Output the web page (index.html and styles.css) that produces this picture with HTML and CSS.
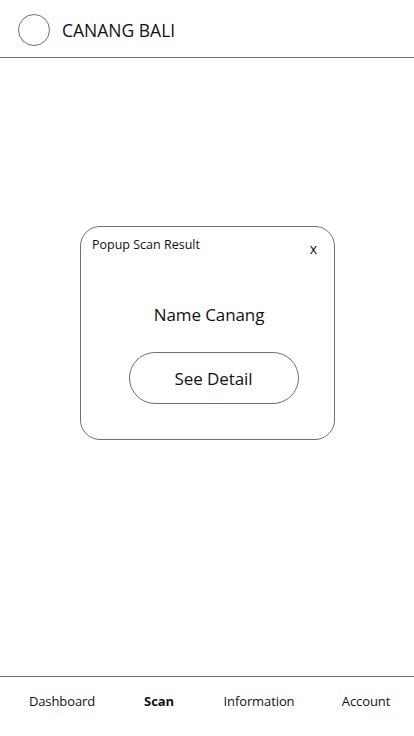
FILE: index.html
```html
<!DOCTYPE html>
<html>
<head>
<meta charset="utf-8">
<link rel="stylesheet" href="styles.css">
</head>
<body>
<div class="app">
  <header class="header">
    <div class="avatar"></div>
    <div class="title">CANANG BALI</div>
  </header>
  <main class="main">
    <div class="popup">
      <div class="popup-head">
        <span class="popup-title">Popup Scan Result</span>
        <span class="close">x</span>
      </div>
      <div class="name">Name Canang</div>
      <div class="btn">See Detail</div>
    </div>
  </main>
  <nav class="nav">
    <span class="nav-item">Dashboard</span>
    <span class="nav-item active">Scan</span>
    <span class="nav-item">Information</span>
    <span class="nav-item">Account</span>
  </nav>
</div>
</body>
</html>
```
FILE: styles.css
```css
html, body {
  margin: 0;
  padding: 0;
  background: #fff;
}
body {
  font-family: "Open Sans", "Noto Sans", sans-serif;
  color: #111;
}
.app {
  width: 414px;
  height: 736px;
  display: flex;
  flex-direction: column;
}
.header {
  height: 58px;
  border-bottom: 1px solid #707070;
  display: flex;
  align-items: center;
  padding-left: 18px;
  box-sizing: border-box;
  flex-shrink: 0;
}
.avatar {
  width: 30px;
  height: 30px;
  border: 1px solid #707070;
  border-radius: 50%;
  margin-top: 2px;
}
.title {
  margin-left: 12px;
  font-size: 17.5px;
  letter-spacing: 0;
  margin-top: 2px;
}
.main {
  flex: 1;
  display: flex;
  flex-direction: column;
  align-items: center;
  padding-top: 168px;
  box-sizing: border-box;
}
.popup {
  width: 255px;
  height: 214px;
  box-sizing: border-box;
  border: 1px solid #707070;
  border-radius: 20px;
  margin-left: 1px;
  display: flex;
  flex-direction: column;
  align-items: center;
}
.popup-head {
  align-self: stretch;
  display: flex;
  justify-content: space-between;
  padding: 9px 17px 0 11px;
}
.popup-title {
  font-size: 12.5px;
  letter-spacing: 0;
}
.close {
  font-size: 14px;
  margin-top: 3px;
}
.name {
  margin-top: 45px;
  font-size: 17px;
  letter-spacing: -0.1px;
  margin-left: 3px;
}
.btn {
  margin-top: 26px;
  width: 170px;
  height: 52px;
  box-sizing: border-box;
  border: 1px solid #707070;
  border-radius: 26px;
  display: flex;
  align-items: center;
  justify-content: center;
  font-size: 17px;
  letter-spacing: -0.1px;
  margin-left: 12px;
}
.nav {
  height: 60px;
  border-top: 1px solid #707070;
  box-sizing: border-box;
  flex-shrink: 0;
  display: flex;
  align-items: flex-start;
  padding-top: 15px;
  font-size: 13px;
}
.nav-item {
  letter-spacing: -0.1px;
  text-align: center;
}
.nav-item:nth-child(1) { width: 124px; }
.nav-item:nth-child(2) { width: 70px; }
.nav-item:nth-child(3) { width: 130px; }
.nav-item:nth-child(4) { width: 84px; }
.active {
  font-weight: 700;
}
```
